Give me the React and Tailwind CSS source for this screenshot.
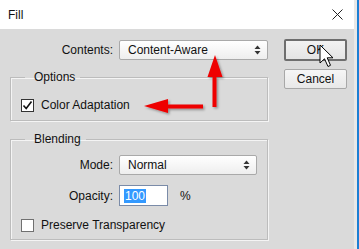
import React from "react";

function UpDown() {
  return (
    <svg width="7" height="10" viewBox="0 0 7 10" className="shrink-0">
      <path d="M3.5 0.5 L6.5 4 L0.5 4 Z" fill="#333" />
      <path d="M3.5 9.5 L6.5 6 L0.5 6 Z" fill="#333" />
    </svg>
  );
}

function Select({ value, className }) {
  return (
    <div
      className={
        "flex items-center justify-between border border-[#a9a9a9] rounded-[2px] bg-gradient-to-b from-[#ffffff] to-[#eeeeee] pl-[8px] pr-[6px] " +
        className
      }
    >
      <span>{value}</span>
      <UpDown />
    </div>
  );
}

function Checkbox({ checked }) {
  return (
    <div
      className={
        "w-[13px] h-[13px] bg-white border flex items-center justify-center " +
        (checked ? "border-[#333333]" : "border-[#707070]")
      }
    >
      {checked && (
        <svg width="11" height="11" viewBox="0 0 11 11">
          <path d="M1.5 5.5 L4.2 8.5 L9.5 1.5" stroke="#111" strokeWidth="1.6" fill="none" />
        </svg>
      )}
    </div>
  );
}

export default function App() {
  return (
    <div
      className="relative w-[359px] h-[249px] overflow-hidden bg-[#dadada] text-[12px] leading-[14px] text-[#111]"
      style={{ fontFamily: '"Liberation Sans", Arial, sans-serif' }}
    >
      <div className="flex h-full">
        <div className="flex-1 flex flex-col">
          {/* Title bar */}
          <div className="h-[29px] bg-white flex items-center justify-between pl-[8px] pr-[11px]">
            <span>Fill</span>
            <svg width="11" height="11" viewBox="0 0 11 11">
              <path d="M0.5 0.5 L10.5 10.5 M10.5 0.5 L0.5 10.5" stroke="#222" strokeWidth="1" />
            </svg>
          </div>
          {/* Body */}
          <div className="flex flex-1 pl-[10px]">
            <div className="w-[258px] flex flex-col">
              <div className="mt-[11px] h-[20px] flex items-center gap-[6px]">
                <span className="w-[103px] text-right">Contents:</span>
                <Select value="Content-Aware" className="w-[149px] h-[20px]" />
              </div>

              <fieldset className="mt-[10px] border border-[#bcbcbc] shadow-[inset_1px_1px_0_#f4f4f4,1px_1px_0_#f4f4f4] pt-[14px] pb-[8px]">
                <legend className="ml-[14px] pl-[9px] pr-[5px] leading-[14px]">Options</legend>
                <div className="flex items-center h-[14px] pl-[10px] gap-[7px]">
                  <Checkbox checked />
                  <span>Color Adaptation</span>
                </div>
              </fieldset>

              <fieldset className="mt-[11px] border border-[#bcbcbc] shadow-[inset_1px_1px_0_#f4f4f4,1px_1px_0_#f4f4f4] pt-[9px] pb-[7px]">
                <legend className="ml-[14px] pl-[9px] pr-[5px] leading-[14px]">Blending</legend>
                <div className="h-[20px] flex items-center gap-[6px]">
                  <span className="w-[102px] text-right">Mode:</span>
                  <Select value="Normal" className="w-[138px] h-[20px]" />
                </div>
                <div className="mt-[10px] h-[21px] flex items-center gap-[6px]">
                  <span className="w-[102px] text-right">Opacity:</span>
                  <div className="w-[49px] h-[21px] bg-white border border-[#7a8ba8] flex items-center pl-[4px]">
                    <span className="bg-[#3399ff] text-white px-[1px]">100</span>
                  </div>
                  <span className="ml-[6px]">%</span>
                </div>
                <div className="mt-[12px] h-[14px] flex items-center pl-[10px] gap-[7px]">
                  <Checkbox />
                  <span>Preserve Transparency</span>
                </div>
              </fieldset>
            </div>

            <div className="ml-[16px] w-[63px] flex flex-col pt-[10px]">
              <button className="h-[22px] border-2 border-[#6e6e6e] rounded-[2px] bg-gradient-to-b from-[#f2f2f2] to-[#e4e4e4] text-[12px]">
                OK
              </button>
              <button className="mt-[8px] h-[20px] border border-[#a8a8a8] rounded-[2px] bg-gradient-to-b from-[#f6f6f6] to-[#e8e8e8] text-[12px]">
                Cancel
              </button>
            </div>
          </div>
        </div>
        <div className="w-[3px] h-full bg-[#e8e8e8]" />
        <div className="w-[2px] h-full bg-[#1b7fd4]" />
      </div>

      {/* Annotation arrows */}
      <svg
        className="absolute left-0 top-0 pointer-events-none"
        width="359"
        height="249"
        viewBox="0 0 359 249"
      >
        <defs>
          <filter id="sh" x="-20%" y="-20%" width="140%" height="140%">
            <feDropShadow dx="1.5" dy="1.5" stdDeviation="1.2" floodColor="#000" floodOpacity="0.35" />
          </filter>
        </defs>
        <g fill="#ee0000" filter="url(#sh)">
          <rect x="212.5" y="76" width="4" height="31" />
          <path d="M215 55 L222.5 77 L207.5 77 Z" />
          <rect x="166" y="104.5" width="37" height="4" />
          <path d="M144 106 L168 99 L168 113 Z" />
        </g>
        {/* cursor */}
        <path
          d="M320 45 L320 63 L324.5 58.8 L328 66.5 L330.5 65.3 L327.2 57.8 L333 57.8 Z"
          fill="#fff"
          stroke="#000"
          strokeWidth="1"
          strokeLinejoin="round"
        />
      </svg>
    </div>
  );
}
